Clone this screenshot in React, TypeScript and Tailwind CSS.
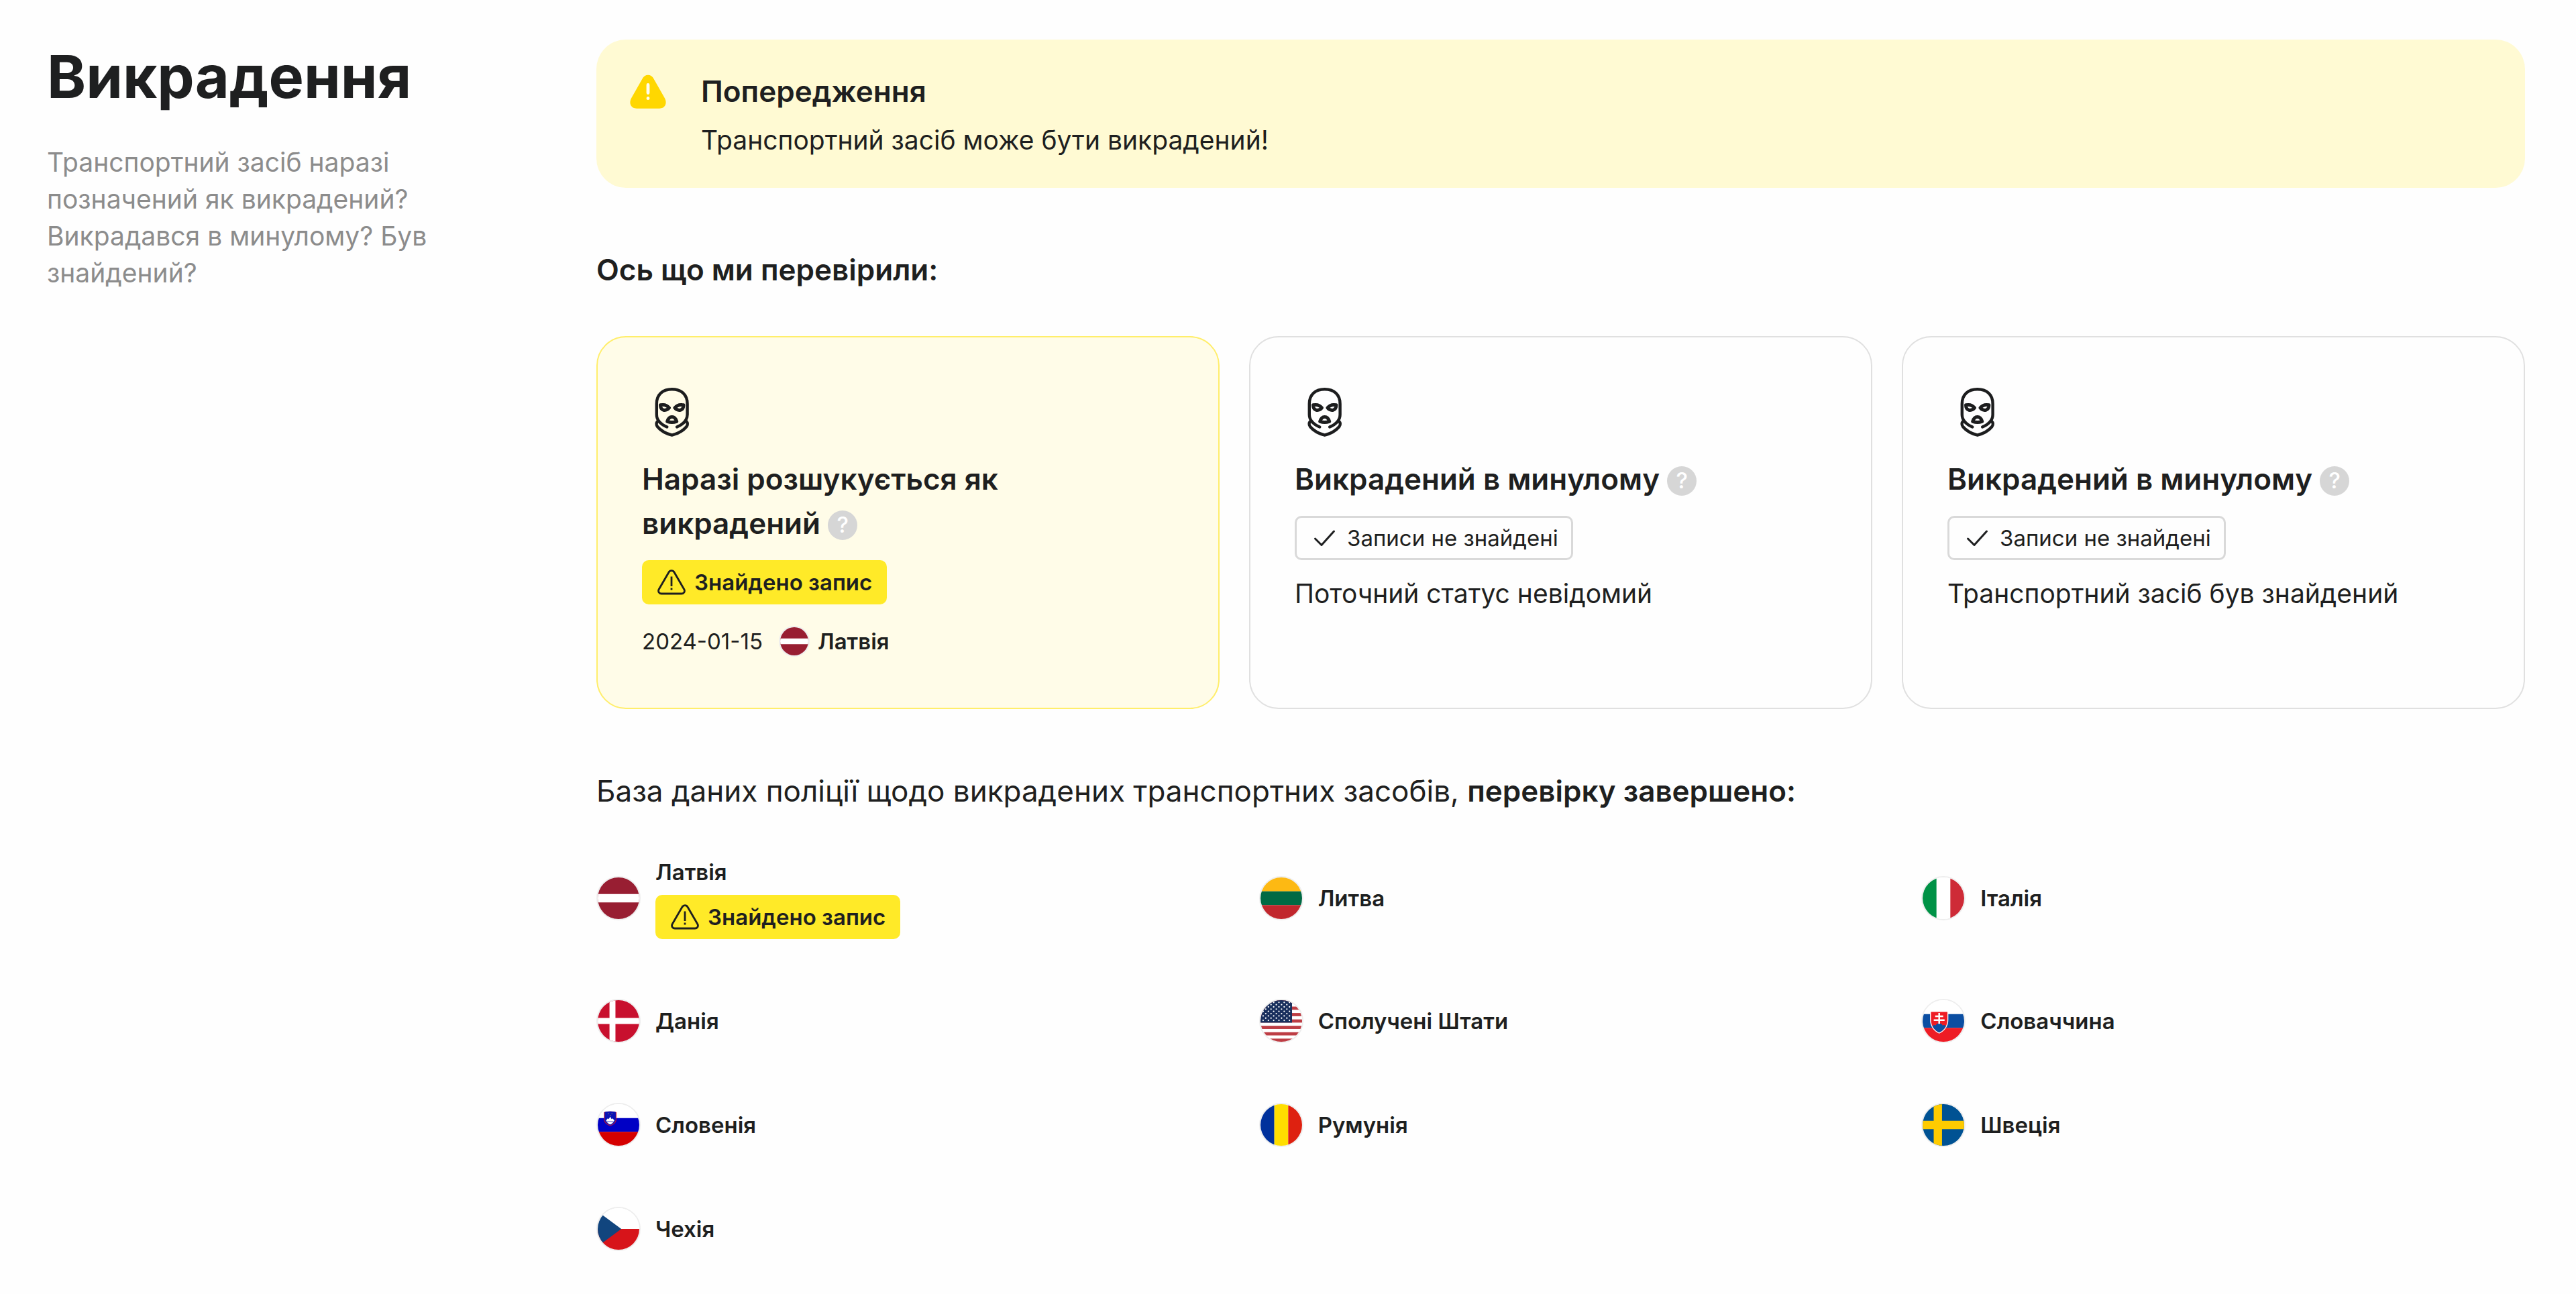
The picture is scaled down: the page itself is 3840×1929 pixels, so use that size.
import type { ReactNode } from "react"

type FlagCode = "lv" | "lt" | "it" | "dk" | "us" | "sk" | "si" | "ro" | "se" | "cz"

// every flag is drawn on a 60x60 canvas and clipped to a circle by its wrapper
const flags: Record<FlagCode, ReactNode> = {
  lv: (
    <>
      <path fill="#981e32" d="M0 0h60v60H0z" />
      <path fill="#fff" d="M0 24h60v12H0z" />
    </>
  ),
  lt: (
    <>
      <path fill="#fdb913" d="M0 0h60v20H0z" />
      <path fill="#006a44" d="M0 20h60v20H0z" />
      <path fill="#c1272d" d="M0 40h60v20H0z" />
    </>
  ),
  it: (
    <>
      <path fill="#fff" d="M0 0h60v60H0z" />
      <path fill="#009246" d="M0 0h20v60H0z" />
      <path fill="#ce2b37" d="M40 0h20v60H40z" />
    </>
  ),
  dk: (
    <>
      <path fill="#c8102e" d="M0 0h60v60H0z" />
      <path fill="#fff" d="M17 0h8.600v60H17zM0 25.700h60v8.600H0z" />
    </>
  ),
  us: (
    <>
      <path fill="#fff" d="M0 0h60v60H0z" />
      {[0, 1, 2, 3, 4, 5, 6].map((i) => (
        <rect key={i} y={i * 9.24} width="60" height="4.62" fill="#bd3d44" />
      ))}
      <path fill="#192f5d" d="M0 0h45.500v32.300H0z" />
      {Array.from({ length: 9 }, (_, row) =>
        Array.from({ length: row % 2 ? 5 : 6 }, (_, col) => (
          <circle
            key={`${row}-${col}`}
            cx={3.8 + col * 7.6 + (row % 2 ? 3.8 : 0)}
            cy={3.2 + row * 3.24}
            r="1.1"
            fill="#fff"
          />
        )),
      )}
    </>
  ),
  sk: (
    <>
      <path fill="#fff" d="M0 0h60v20H0z" />
      <path fill="#0b4ea2" d="M0 20h60v20H0z" />
      <path fill="#ee1c25" d="M0 40h60v20H0z" />
      <path fill="#fff" d="M10.700 16h26.400v12c0 10-5.500 16.500-13.200 20.200-7.700-3.700-13.200-10.200-13.200-20.200z" />
      <path fill="#ee1c25" d="M12 17h23.800v11c0 9-4.800 15.300-11.900 18.800C16.800 43.300 12 37 12 28z" />
      <path
        fill="#0b4ea2"
        d="M14.200 37.500c1.500-1.800 3.200-2.200 4.700-1 1-2.200 2.700-3 5-3s4 .8 5 3c1.500-1.200 3.200-.8 4.700 1-2 4-5.300 7.100-9.700 9.300-4.400-2.200-7.700-5.300-9.700-9.300z"
      />
      <path fill="#fff" d="M22.700 18.500h2.400v3.500h4.600v2.400h-4.600v3.100h6.600V30h-6.600v4h-2.400v-4h-6.600v-2.500h6.600v-3.100h-4.600V22h4.600z" />
    </>
  ),
  si: (
    <>
      <path fill="#fff" d="M0 0h60v20H0z" />
      <path fill="#0000c5" d="M0 20h60v20H0z" />
      <path fill="#d50000" d="M0 40h60v20H0z" />
      <path fill="#c8102e" d="M9 11.500c6-1.500 12-1.500 18 0v10c0 5-3.500 8-9 10-5.500-2-9-5-9-10z" />
      <path fill="#0b13b5" d="M10 11.300c5.300-1.300 10.700-1.300 16 0v10c0 4.500-3 7.300-8 9.200-5-1.900-8-4.700-8-9.200z" />
      <path fill="#fff" d="m12 23.500 2.500-3 1.500 1 2-3.500 2 3.500 1.500-1 2.500 3c-1 2.600-3 4.600-6 5.800-3-1.200-5-3.200-6-5.800z" />
      <path fill="none" stroke="#0b13b5" strokeWidth=".8" d="M13 25.200h10" />
      <path fill="#ffdf00" d="M15 13.500h1v1h-1zM20 13.500h1v1h-1zM17.500 15.500h1v1h-1z" />
    </>
  ),
  ro: (
    <>
      <path fill="#00319c" d="M0 0h20v60H0z" />
      <path fill="#ffde00" d="M20 0h20v60H20z" />
      <path fill="#de2110" d="M40 0h20v60H40z" />
    </>
  ),
  se: (
    <>
      <path fill="#005293" d="M0 0h60v60H0z" />
      <path fill="#fecb00" d="M16 0h12v60H16zM0 24h60v12H0z" />
    </>
  ),
  cz: (
    <>
      <path fill="#fff" d="M0 0h60v30H0z" />
      <path fill="#d7141a" d="M0 30h60v30H0z" />
      <path fill="#11457e" d="M-8 -1 34 30-8 61z" />
    </>
  ),
}

const countries: { code: FlagCode; name: string; found?: boolean }[] = [
  { code: "lv", name: "Латвія", found: true },
  { code: "lt", name: "Литва" },
  { code: "it", name: "Італія" },
  { code: "dk", name: "Данія" },
  { code: "us", name: "Сполучені Штати" },
  { code: "sk", name: "Словаччина" },
  { code: "si", name: "Словенія" },
  { code: "ro", name: "Румунія" },
  { code: "se", name: "Швеція" },
  { code: "cz", name: "Чехія" },
]

function Flag({ code, small }: { code: FlagCode; small?: boolean }) {
  return (
    <span
      className={`block shrink-0 overflow-hidden rounded-full border-2 border-[#eeeeee] ${small ? "size-[46px]" : "size-[66px]"}`}
    >
      <svg viewBox="0 0 60 60" className="block size-full" aria-hidden="true">
        {flags[code]}
      </svg>
    </span>
  )
}

function MaskIcon() {
  return (
    <svg
      viewBox="0 0 88 88"
      className="mb-6 block size-[88px]"
      fill="none"
      stroke="#1c1d1e"
      strokeWidth="4.400"
      strokeLinecap="round"
      strokeLinejoin="round"
      aria-hidden="true"
    >
      <path d="M37.300 67.500C28 63.500 21.800 57.500 21.800 49V33C21.800 19 31 11.200 44.700 11.200S67.600 19 67.600 33v16c0 8.500-6.200 14.500-15.500 18.500" />
      <path d="M23.500 59c-2.300 2-2.600 5.200-.5 8 5 6 13 10.500 21.700 12.700C53.400 77.500 61.400 73 66.400 67c2.100-2.800 1.800-6-.5-8" />
      <path
        strokeWidth="5"
        d="M27.500 34.800C32.500 33.800 37.500 35 40.500 39c-2.500 3-6 3.700-8.500 3.200-3.300-.8-4.500-3.400-4.500-7.400zM61.900 34.800C56.900 33.800 51.900 35 48.900 39c2.500 3 6 3.700 8.500 3.200 3.300-.8 4.500-3.400 4.500-7.400z"
      />
      <path strokeWidth="5" d="M44.700 52.500c3.600 0 5.800 2.600 7 6.800-4.200 1.300-9.800 1.300-14 0 1.200-4.200 3.400-6.800 7-6.800z" />
    </svg>
  )
}

function Help() {
  return (
    <button
      type="button"
      aria-label="Довідка"
      className="inline-flex size-11 items-center justify-center rounded-full bg-[#d6d6d6] align-[2px] text-[33px] leading-none font-medium text-white"
    >
      ?
    </button>
  )
}

function FoundBadge() {
  return (
    <span className="flex h-[66px] w-fit items-center gap-3 rounded-[10px] bg-[#ffea28] px-[22px] text-[33px] leading-[44px] font-semibold">
      <svg
        viewBox="0 0 44 40"
        className="h-10 w-11"
        fill="none"
        stroke="currentColor"
        strokeWidth="2.800"
        strokeLinecap="round"
        strokeLinejoin="round"
        aria-hidden="true"
      >
        <path d="M18 5c1.700-3.300 6.300-3.300 8 0l14.800 25.500c1.700 3.200-.3 6.500-3.800 6.500H7c-3.500 0-5.500-3.300-3.800-6.500z" />
        <path strokeLinecap="butt" d="M22 11.500V26M22 28.500v3" />
      </svg>
      Знайдено запис
    </span>
  )
}

function NotFoundBadge() {
  return (
    <span className="flex h-[66px] w-fit items-center gap-3 rounded-[10px] border-[3px] border-[#d9d9d9] px-[19px] text-[33px] leading-[44px]">
      <svg
        viewBox="0 0 44 40"
        className="h-10 w-11"
        fill="none"
        stroke="currentColor"
        strokeWidth="3"
        strokeLinecap="round"
        strokeLinejoin="round"
        aria-hidden="true"
      >
        <path d="m8.500 21 9.500 9.500L36.500 10" />
      </svg>
      Записи не знайдені
    </span>
  )
}

function Card({ title, active, children }: { title: string; active?: boolean; children: ReactNode }) {
  return (
    <article
      className={`rounded-[44px] border-2 p-[66px] ${active ? "border-[#ffee6b] bg-[#fffce8]" : "border-[#e0e0e0]"}`}
    >
      <MaskIcon />
      <h3 className="mb-[22px] text-[44px] leading-[66px] font-semibold">
        {title} <Help />
      </h3>
      <div className="flex flex-col gap-[22px]">{children}</div>
    </article>
  )
}

export default function App() {
  return (
    <main
      lang="uk"
      className="flex min-h-screen items-start bg-[#fefefe] py-[59px] pr-[76px] pl-[70px] font-['Inter',sans-serif] text-[39px] leading-[55px] text-[#1e1f20]"
    >
      <aside className="mr-[219px] w-[600px] shrink-0">
        <h1 className="mb-[45px] text-[88px] leading-[110px] font-bold">Викрадення</h1>
        <p className="text-[#8c8c8c]">
          Транспортний засіб наразі позначений як викрадений? Викрадався в минулому? Був знайдений?
        </p>
      </aside>

      <div className="min-w-0 flex-1">
        {/* warning */}
        <section className="flex items-start gap-[46px] rounded-[44px] bg-[#fffad3] p-11">
          <svg viewBox="0 0 66 66" className="size-[66px] shrink-0" aria-hidden="true">
            <path
              fill="#ffd700"
              d="M24.500 14.500C28 6.900 38 6.900 41.500 14.500L58 43.500C62 51 58.500 58.700 50 58.700H16C7.500 58.700 4 51 8 43.500z"
            />
            <path stroke="#fffdf0" strokeWidth="4.800" strokeLinecap="round" d="M33 23.500v12M33 43.300v.4" />
          </svg>
          <div>
            <h2 className="mb-3 text-[44px] leading-[66px] font-semibold">Попередження</h2>
            <p>Транспортний засіб може бути викрадений!</p>
          </div>
        </section>

        <h2 className="mt-[89px] mb-[66px] text-[44px] leading-[66px] font-semibold">Ось що ми перевірили:</h2>

        <div className="grid grid-cols-3 gap-11">
          <Card title="Наразі розшукується як викрадений" active>
            <FoundBadge />
            <div className="flex h-[66px] items-center text-[33px] leading-[44px]">
              <time dateTime="2024-01-15" className="mr-6">
                2024-01-15
              </time>
              <Flag code="lv" small />
              <span className="ml-3 font-semibold">Латвія</span>
            </div>
          </Card>
          <Card title="Викрадений в минулому">
            <NotFoundBadge />
            <p>Поточний статус невідомий</p>
          </Card>
          <Card title="Викрадений в минулому">
            <NotFoundBadge />
            <p>Транспортний засіб був знайдений</p>
          </Card>
        </div>

        <h2 className="mt-[89px] mb-[66px] text-[44px] leading-[66px]">
          База даних поліції щодо викрадених транспортних засобів, <b className="font-semibold">перевірку завершено:</b>
        </h2>

        <ul className="grid grid-cols-3 gap-x-[88px] gap-y-[89px]">
          {countries.map((country) => (
            <li key={country.code} className="flex items-center gap-[22px] text-[33px] leading-[44px] font-semibold">
              <Flag code={country.code} />
              <div className="flex flex-col gap-3">
                {country.name}
                {country.found && <FoundBadge />}
              </div>
            </li>
          ))}
        </ul>
      </div>
    </main>
  )
}
